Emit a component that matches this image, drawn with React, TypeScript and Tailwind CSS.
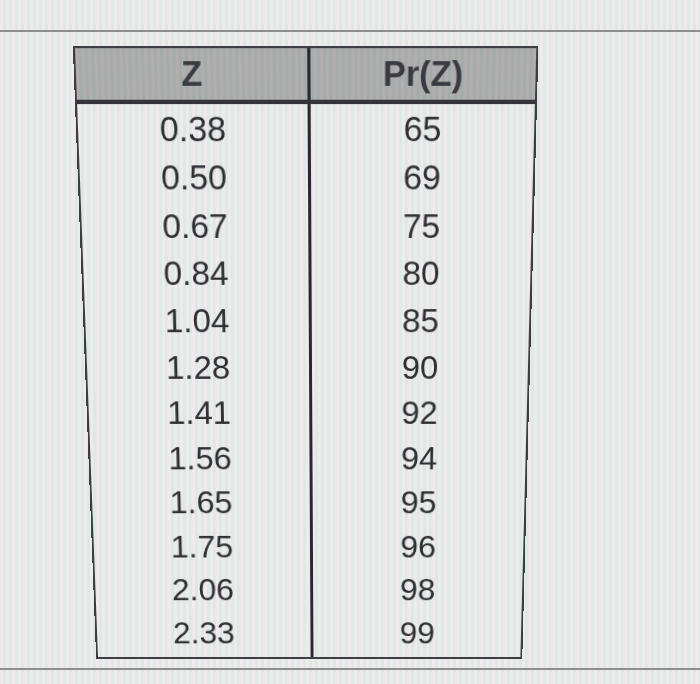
const rows: [string, string][] = [
  ["0.38", "65"],
  ["0.50", "69"],
  ["0.67", "75"],
  ["0.84", "80"],
  ["1.04", "85"],
  ["1.28", "90"],
  ["1.41", "92"],
  ["1.56", "94"],
  ["1.65", "95"],
  ["1.75", "96"],
  ["2.06", "98"],
  ["2.33", "99"],
];

export default function App() {
  return (
    <div className="w-[700px] h-[684px] overflow-hidden pt-[30px] bg-[repeating-linear-gradient(90deg,#f1e9ed_0px,#f1e9ed_3px,#dbebe3_3px,#dbebe3_6px)] font-['Liberation_Sans',Arial,sans-serif]">
      <div className="h-[640px] border-t-2 border-b-2 border-[#8e8e8e]">
        <div className="ml-[85px] mt-[25px] w-[445px] h-[618px] border-2 border-[#3e3e42] [transform:perspective(1000px)_rotateX(-8.25deg)_skewX(0.33deg)] flex flex-col">
          <div className="flex h-[52px] border-b-4 border-[#34343a] bg-[repeating-linear-gradient(90deg,#b3adb1_0px,#b3adb1_3px,#a3ada7_3px,#a3ada7_6px)]">
            <div className="w-[222px] flex items-center justify-center text-[33px] font-bold text-[#3a3a42]">Z</div>
            <div className="w-[3px] bg-[#2a2634]" />
            <div className="flex-1 flex items-center justify-center text-[33px] font-bold text-[#3a3a42]">Pr(Z)</div>
          </div>
          <div className="flex flex-1">
            <div className="w-[222px] flex flex-col">
              {rows.map(([z]) => (
                <div key={z} className="h-[46.6px] flex items-center justify-center text-[33px] text-[#2f2f34]">
                  {z}
                </div>
              ))}
            </div>
            <div className="w-[3px] bg-[#2a2634]" />
            <div className="flex-1 flex flex-col">
              {rows.map(([z, p]) => (
                <div key={z} className="h-[46.6px] flex items-center justify-center text-[33px] text-[#2f2f34]">
                  {p}
                </div>
              ))}
            </div>
          </div>
        </div>
      </div>
    </div>
  );
}
